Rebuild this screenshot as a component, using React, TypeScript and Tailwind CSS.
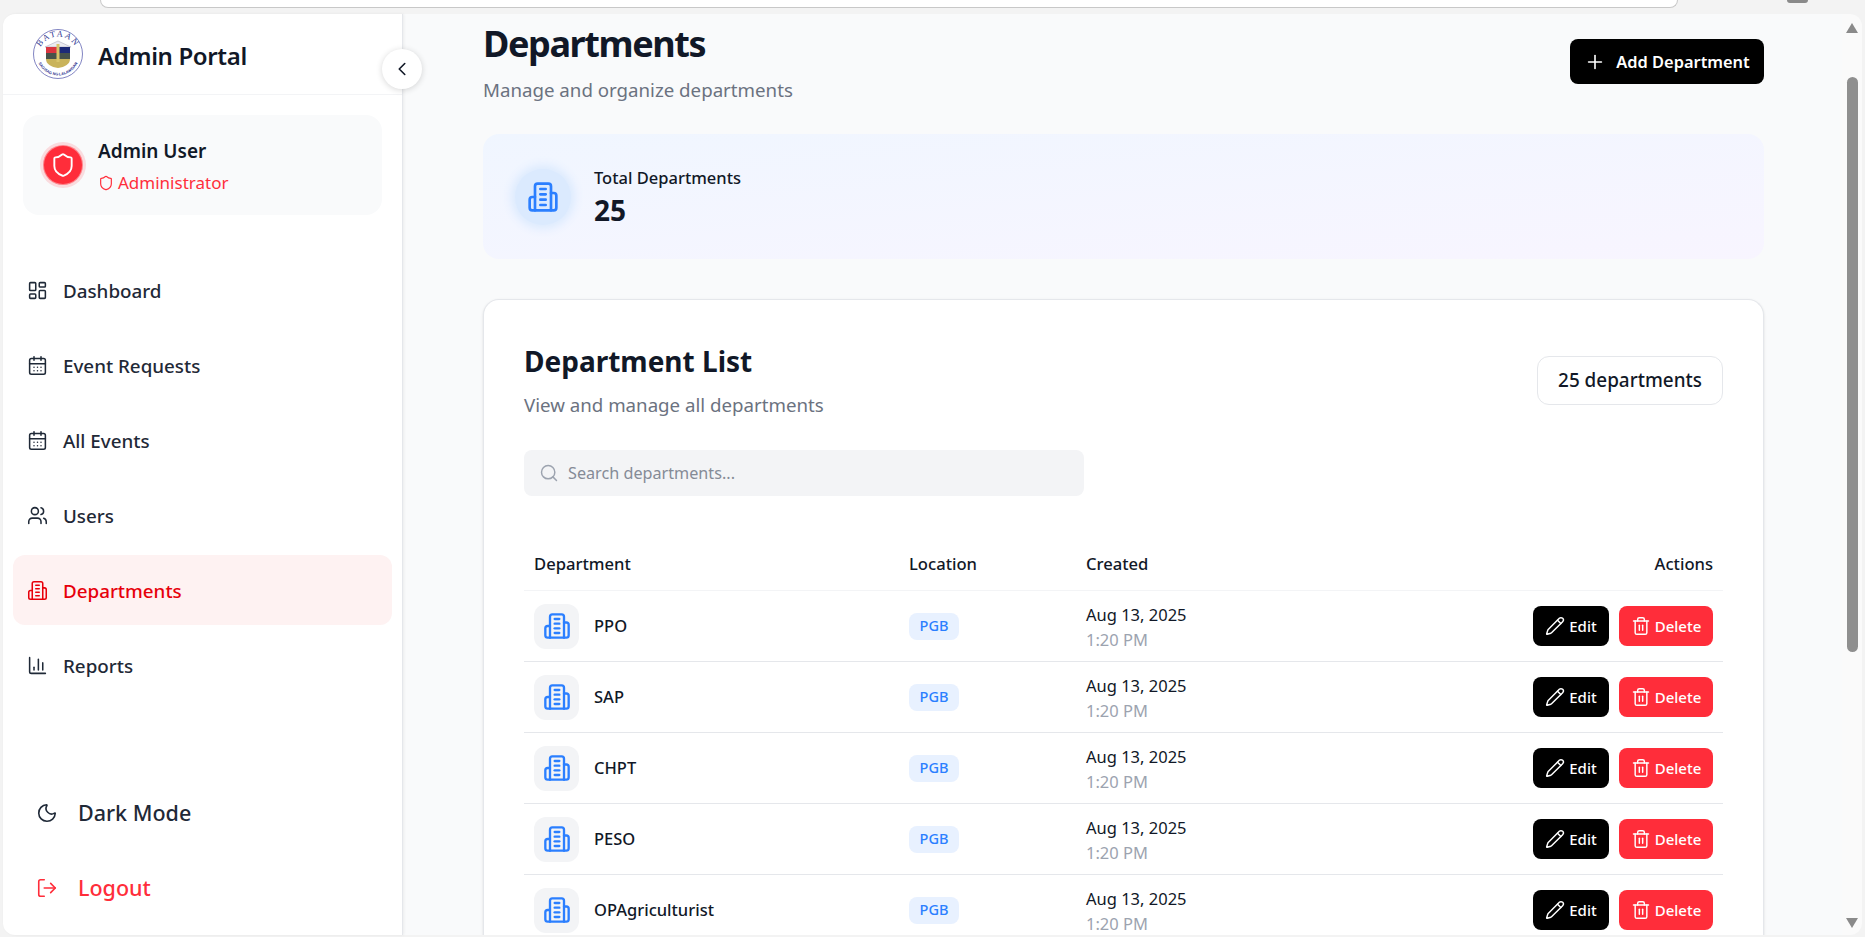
import { BarChart3, CalendarDays, ChevronLeft, LayoutDashboard, LogOut, Moon, Pencil, Plus, Search, Shield, Trash2, Users } from "lucide-react";

const FONT = "font-['Noto_Sans','Open_Sans',sans-serif]";

// old lucide building-2, the current package draws it differently
function Building({ className, strokeWidth = 2 }: { className?: string; strokeWidth?: number }) {
  return (
    <svg viewBox="0 0 24 24" fill="none" stroke="currentColor" strokeWidth={strokeWidth} strokeLinecap="round" strokeLinejoin="round" className={className}>
      <path d="M6 22V4a2 2 0 0 1 2-2h8a2 2 0 0 1 2 2v18Z" />
      <path d="M6 12H4a2 2 0 0 0-2 2v6a2 2 0 0 0 2 2h2" />
      <path d="M18 9h2a2 2 0 0 1 2 2v9a2 2 0 0 1-2 2h-2" />
      <path d="M10 6h4" />
      <path d="M10 10h4" />
      <path d="M10 14h4" />
      <path d="M10 18h4" />
    </svg>
  );
}

function Seal() {
  return (
    <svg viewBox="0 0 50 50" className="h-[50px] w-[50px] shrink-0">
      <defs>
        <path id="sealTop" d="M5.5 27a19.5 19.5 0 0 1 39 0" />
        <path id="sealBottom" d="M3.5 25a21.5 21.5 0 0 0 43 0" />
      </defs>
      <circle cx="25" cy="25" r="24.5" fill="#fff" stroke="#4a4fa8" strokeWidth="0.7" />
      <text fontSize="8.5" fill="#2c3390" fontFamily="Liberation Serif, serif" letterSpacing="1.5" textAnchor="middle">
        <textPath href="#sealTop" startOffset="50%">BATAAN</textPath>
      </text>
      <text fontSize="3.8" fontWeight="700" fill="#2c3390" fontFamily="Liberation Sans, sans-serif" textAnchor="middle">
        <textPath href="#sealBottom" startOffset="50%">SAGISAG NG LALAWIGAN</textPath>
      </text>
      <path d="M12 18l13-6 13 6z" fill="#ececf2" stroke="#8a8aa0" strokeWidth="0.4" />
      <path d="M13 18h12v8H13z" fill="#d9343f" />
      <path d="M25 18h12v8H25z" fill="#1c2a78" />
      <path d="M13 24h24v6H13z" fill="#46524a" />
      <path d="M13 30h24c0 5-5 8-12 9-7-1-12-4-12-9z" fill="#c9b35a" />
      <path d="M23.5 15h3v18h-3z" fill="#d8c46a" />
    </svg>
  );
}

const NAV = [
  { label: "Dashboard", Icon: LayoutDashboard },
  { label: "Event Requests", Icon: CalendarDays },
  { label: "All Events", Icon: CalendarDays },
  { label: "Users", Icon: Users },
  { label: "Departments", Icon: Building, active: true },
  { label: "Reports", Icon: BarChart3 },
];

const ROWS = ["PPO", "SAP", "CHPT", "PESO", "OPAgriculturist"];

function Sidebar() {
  return (
    <aside className="relative flex w-[400px] shrink-0 flex-col rounded-l-xl border-r border-[#e5e7eb] bg-white shadow-[1px_0_3px_rgba(0,0,0,0.06)]">
      <div className="flex h-[81px] shrink-0 items-center gap-[15px] border-b border-[#f3f4f6] pl-[30px]">
        <Seal />
        <span className="pt-[3px] text-[24px] font-semibold tracking-[-0.35px] text-[#111827]">Admin Portal</span>
      </div>
      <button className="absolute left-[379px] top-[35px] flex h-10 w-10 items-center justify-center rounded-full bg-white shadow-[0_1px_6px_rgba(0,0,0,0.16)]">
        <ChevronLeft className="h-[22px] w-[22px] text-[#111827]" strokeWidth={1.75} />
      </button>

      <div className="mx-5 mt-[20px] flex h-[100px] items-center gap-[15px] rounded-2xl bg-[#f9fafb] pl-[20px]">
        <div className="flex h-10 w-10 items-center justify-center rounded-full border border-white/40 bg-[#ff2d3a] shadow-[0_0_0_3px_rgba(255,45,58,0.15)]">
          <Shield className="h-[26px] w-[26px] text-white" strokeWidth={1.75} />
        </div>
        <div className="flex flex-col gap-[8px] pt-[2px]">
          <span className="text-[19px] font-semibold leading-[25px] text-[#111827]">Admin User</span>
          <span className="flex items-center gap-[4px] text-[17px] leading-[22px] text-[#ff2d3a]">
            <Shield className="h-4 w-4" strokeWidth={1.75} />
            Administrator
          </span>
        </div>
      </div>

      <nav className="mt-[40px] flex flex-col gap-[5px] px-[10px]">
        {NAV.map(({ label, Icon, active }) => (
          <div
            key={label}
            className={`flex h-[70px] items-center gap-[15px] rounded-xl pl-[14px] text-[18.8px] font-medium ${active ? "bg-[#fef2f2] text-[#e7000b]" : "text-[#1f2937]"}`}
          >
            <Icon className="h-[21px] w-[21px] shrink-0" strokeWidth={1.75} />
            <span className="pt-[2px]">{label}</span>
          </div>
        ))}
      </nav>

      <div className="mt-auto flex flex-col gap-[5px] px-[10px] pb-[12px]">
        <div className="flex h-[70px] items-center gap-[20px] pl-[23px] text-[21.5px] font-medium text-[#1f2937]">
          <Moon className="h-[22px] w-[22px]" strokeWidth={1.75} />
          Dark Mode
        </div>
        <div className="flex h-[70px] items-center gap-[20px] pl-[23px] text-[21.5px] font-medium text-[#ff2d3a]">
          <LogOut className="h-[22px] w-[22px]" strokeWidth={1.75} />
          Logout
        </div>
      </div>
    </aside>
  );
}

function Row({ name }: { name: string }) {
  return (
    <div className="grid h-[71px] shrink-0 grid-cols-[375px_177px_1fr_auto] items-center border-b border-[#e5e7eb] px-[10px]">
      <div className="flex items-center gap-[15px]">
        <div className="flex h-[45px] w-[45px] items-center justify-center rounded-xl bg-[#f3f4f6]">
          <Building className="h-7 w-7 text-[#2b7fff]" />
        </div>
        <span className="pt-[1px] text-[16.5px] font-medium text-[#111827]">{name}</span>
      </div>
      <div>
        <span className="inline-flex h-[27px] w-[50px] items-center justify-center rounded-lg bg-[#e8f1ff] text-[14.5px] font-medium text-[#2b7fff]">PGB</span>
      </div>
      <div className="flex flex-col pt-[1px]">
        <span className="text-[16.5px] leading-[25px] text-[#111827]">Aug 13, 2025</span>
        <span className="text-[16.5px] leading-[25px] text-[#9ca3af]">1:20 PM</span>
      </div>
      <div className="flex items-center gap-[10px]">
        <button className="flex h-10 w-[76px] items-center justify-center gap-[4px] rounded-lg bg-black text-[15px] font-medium text-white">
          <Pencil className="h-5 w-5" strokeWidth={1.75} />
          Edit
        </button>
        <button className="flex h-10 w-[94px] items-center justify-center gap-[4px] rounded-lg bg-[#ff2d3a] text-[15px] font-medium text-white">
          <Trash2 className="h-5 w-5" strokeWidth={1.75} />
          Delete
        </button>
      </div>
    </div>
  );
}

function Main() {
  return (
    <main className="flex min-w-0 flex-1 flex-col overflow-hidden bg-[#f9fafb] pl-[80px] pr-[78px]">
      <div className="mt-[6px] flex shrink-0 items-start justify-between">
        <div>
          <h1 className="text-[36px] font-bold leading-[48px] tracking-[-1.4px] text-[#111827]">Departments</h1>
          <p className="mt-[9px] text-[18.7px] leading-[25px] text-[#6b7280]">Manage and organize departments</p>
        </div>
        <button className="mt-[19px] flex h-[45px] w-[194px] items-center justify-center gap-[10px] rounded-lg bg-black pt-[1px] text-[16.4px] font-semibold text-white">
          <Plus className="h-[22px] w-[22px]" strokeWidth={1.75} />
          Add Department
        </button>
      </div>

      <section className="mt-[32px] flex h-[125px] shrink-0 items-center gap-[23px] rounded-2xl bg-gradient-to-br from-[#f0f6ff] to-[#f8f5ff] pl-[32px]">
        <div className="flex h-[56px] w-[56px] items-center justify-center rounded-full bg-[#dbeafe] shadow-[0_0_10px_4px_#dbeafe]">
          <Building className="h-8 w-8 text-[#2b7fff]" />
        </div>
        <div>
          <div className="text-[16.5px] font-medium leading-[24px] text-[#111827]">Total Departments</div>
          <div className="mt-[2px] text-[28px] font-bold leading-[36px] text-[#111827]">25</div>
        </div>
      </section>

      <section className="mt-[40px] flex flex-1 flex-col rounded-t-2xl border border-[#e5e7eb] border-b-0 bg-white px-[40px] pt-[42px] shadow-sm">
        <div className="flex shrink-0 items-start justify-between">
          <div>
            <h2 className="text-[28px] font-bold leading-[38px] text-[#111827]">Department List</h2>
            <p className="mt-[12px] text-[18.7px] leading-[26px] text-[#6b7280]">View and manage all departments</p>
          </div>
          <div className="mt-[14px] flex h-[49px] w-[186px] items-center justify-center rounded-xl border border-[#e5e7eb] text-[18.9px] font-medium text-[#111827]">
            25 departments
          </div>
        </div>

        <div className="mt-[32px] flex h-[46px] w-[560px] shrink-0 items-center gap-[9px] rounded-lg bg-[#f3f4f6] pl-[15px] text-[16.2px] text-[#858b96]">
          <Search className="h-5 w-5 text-[#9ca3af]" strokeWidth={1.75} />
          Search departments...
        </div>

        <div className="mt-[42px] grid h-[53px] shrink-0 grid-cols-[375px_177px_1fr_auto] items-center border-b border-[#f3f4f6] px-[10px] text-[16.6px] font-medium text-[#111827]">
          <span>Department</span>
          <span>Location</span>
          <span>Created</span>
          <span>Actions</span>
        </div>
        {ROWS.map((r) => (
          <Row key={r} name={r} />
        ))}
      </section>
    </main>
  );
}

function Scrollbar() {
  return (
    <div className="flex w-[20px] shrink-0 flex-col items-center rounded-r-xl bg-[#fafafa]">
      <div className="mt-[9px] h-0 w-0 shrink-0 border-x-[6.5px] border-b-[10px] border-x-transparent border-b-[#8a8a8a]" />
      <div className="mt-[44px] h-[575px] w-[11px] rounded-full bg-[#8f8f8f]" />
      <div className="mb-[7px] mt-auto h-0 w-0 shrink-0 border-x-[6.5px] border-t-[10px] border-x-transparent border-t-[#8a8a8a]" />
    </div>
  );
}

export default function App() {
  return (
    <div className={`flex h-screen flex-col overflow-hidden bg-[#f3f3f3] px-[3px] ${FONT}`}>
      <div className="flex h-[14px] shrink-0 items-start">
        <div className="ml-[97px] h-[8px] w-[1578px] rounded-b-2xl border-x border-b border-[#c8c8c8] bg-white" />
        <div className="ml-[109px] h-[3px] w-[21px] rounded-b-full bg-[#8a8a8a]" />
      </div>
      <div className="flex min-h-0 flex-1 pb-[2px]">
        <Sidebar />
        <Main />
        <Scrollbar />
      </div>
    </div>
  );
}
